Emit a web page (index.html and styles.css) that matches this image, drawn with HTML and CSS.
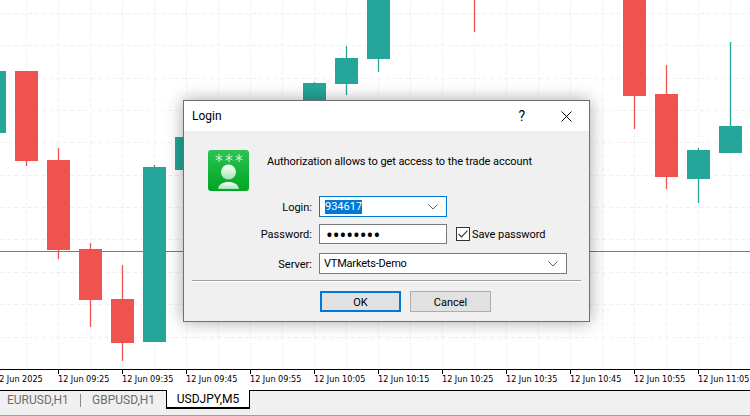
FILE: index.html
```html
<!DOCTYPE html>
<html lang="en">
<head>
    <meta charset="UTF-8">
    <title>Login</title>
    <link rel="stylesheet" href="styles.css">
</head>
<body>
    <svg class="chart" width="750" height="369" viewBox="0 0 750 369">
        <path class="grid" d="M26.5 0V369M58.5 0V369M90.5 0V369M122.5 0V369M154.5 0V369M186.5 0V369M218.5 0V369M250.5 0V369M282.5 0V369M314.5 0V369M346.5 0V369M378.5 0V369M410.5 0V369M442.5 0V369M474.5 0V369M506.5 0V369M538.5 0V369M570.5 0V369M602.5 0V369M634.5 0V369M666.5 0V369M698.5 0V369M730.5 0V369"/>
        <path class="grid" d="M0 13.5H750M0 45.5H750M0 78.5H750M0 110.5H750M0 142.5H750M0 175.5H750M0 207.5H750M0 239.5H750M0 272.5H750M0 304.5H750M0 337.5H750"/>
        <path class="price-line" d="M0 251.5H750"/>
        <path class="wick bear" d="M26.5 161V166M58.5 148V259M90.5 243V327M122.5 265V361M474.5 0V32M634.5 96V129M666.5 65V189"/>
        <path class="wick bull" d="M154.5 165V342M314.5 82V100M346.5 46V95M378.5 59V72M698.5 148V203M730.5 42V126"/>
        <path class="body bear" d="M15 71h23v90h-23zM47 160h23v90h-23zM79 249h23v51h-23zM111 299h23v44h-23zM623 0h23v96h-23zM655 94h23v83h-23z"/>
        <path class="body bull" d="M0 71h6v62h-6zM143 167h23v175h-23zM175 137h23v33h-23zM303 83h23v40h-23zM335 58h23v26h-23zM367 0h23v59h-23zM687 150h23v29h-23zM719 126h23v27h-23z"/>
    </svg>

    <div class="axis">
        <span class="tick">12 Jun 2025</span>
        <span class="tick">12 Jun 09:25</span>
        <span class="tick">12 Jun 09:35</span>
        <span class="tick">12 Jun 09:45</span>
        <span class="tick">12 Jun 09:55</span>
        <span class="tick">12 Jun 10:05</span>
        <span class="tick">12 Jun 10:15</span>
        <span class="tick">12 Jun 10:25</span>
        <span class="tick">12 Jun 10:35</span>
        <span class="tick">12 Jun 10:45</span>
        <span class="tick">12 Jun 10:55</span>
        <span class="tick">12 Jun 11:05</span>
    </div>

    <div class="tabs">
        <div class="tab first-tab">EURUSD,H1</div>
        <div class="tab-sep"></div>
        <div class="tab second-tab">GBPUSD,H1</div>
        <div class="tab active">USDJPY,M5</div>
    </div>

    <div class="dialog">
        <div class="titlebar">
            <span class="title">Login</span>
            <span class="help">?</span>
            <svg class="close" width="11" height="11" viewBox="0 0 11 11">
                <path d="M0.5 0.5L10.5 10.5M10.5 0.5L0.5 10.5"/>
            </svg>
        </div>
        <div class="dialog-body">
            <div class="intro">
                <svg class="key-icon" width="41" height="41" viewBox="0 0 41 41">
                    <defs>
                        <linearGradient id="bg" x1="0" y1="0" x2="0" y2="1">
                            <stop offset="0" stop-color="#2bc452"/>
                            <stop offset="1" stop-color="#00a524"/>
                        </linearGradient>
                        <linearGradient id="person" x1="0" y1="0" x2="0" y2="1">
                            <stop offset="0" stop-color="#ffffff"/>
                            <stop offset="1" stop-color="#a5e3b4"/>
                        </linearGradient>
                    </defs>
                    <rect width="41" height="41" rx="3" fill="url(#bg)"/>
                    <path class="stars" d="M11 4V12M7.6 6L14.4 10M14.4 6L7.6 10M21 4V12M17.6 6L24.4 10M24.4 6L17.6 10M31 4V12M27.6 6L34.4 10M34.4 6L27.6 10"/>
                    <circle cx="20.5" cy="22" r="7.5" fill="url(#person)"/>
                    <path d="M10 39C11 34 15 32 20.5 32C26 32 30 34 31 39Z" fill="url(#person)"/>
                </svg>
                <div class="intro-text">Authorization allows to get access to the trade account</div>
            </div>

            <div class="form">
                <div class="row">
                    <div class="label">Login:</div>
                    <div class="field combo focused">
                        <span class="selected">934617</span>
                        <svg class="chevron" width="10" height="6" viewBox="0 0 10 6"><path d="M0.5 0.5L5 5L9.5 0.5"/></svg>
                    </div>
                </div>
                <div class="row password-row">
                    <div class="label">Password:</div>
                    <div class="field">
                        <span class="dots">••••••••</span>
                    </div>
                    <label class="save">
                        <span class="checkbox">
                            <svg width="10" height="8" viewBox="0 0 11 9"><path d="M0.5 4.5L3.8 7.8L10.5 0.8"/></svg>
                        </span>
                        Save password
                    </label>
                </div>
                <div class="row">
                    <div class="label">Server:</div>
                    <div class="field combo wide">
                        <span class="server-name">VTMarkets-Demo</span>
                        <svg class="chevron" width="10" height="6" viewBox="0 0 10 6"><path d="M0.5 0.5L5 5L9.5 0.5"/></svg>
                    </div>
                </div>
            </div>

            <div class="separator"></div>

            <div class="buttons">
                <button class="button default-button">OK</button>
                <button class="button">Cancel</button>
            </div>
        </div>
    </div>
</body>
</html>
```

FILE: styles.css
```css
html, body {
    margin: 0;
    height: 100%;
}
body {
    width: 750px;
    height: 416px;
    overflow: hidden;
    background: #fff;
    font-family: Roboto, sans-serif;
    font-size: 12px;
    color: #000;
    position: relative;
}

/* chart */
.chart {
    display: block;
}
.grid {
    fill: none;
    stroke: #f0f0f0;
    stroke-width: 1;
    stroke-dasharray: 4 3;
}
.price-line {
    fill: none;
    stroke: #2e9c91;
    stroke-width: 1;
}
.wick {
    fill: none;
    stroke-width: 1.3;
}
.wick.bear {
    stroke: #ef5350;
}
.wick.bull {
    stroke: #26a69a;
}
.body.bear {
    fill: #ef5350;
}
.body.bull {
    fill: #26a69a;
}

/* time axis */
.axis {
    display: flex;
    height: 20px;
    margin-left: -6px;
    border-top: 1px solid #000;
    overflow: hidden;
}
.tick {
    flex: 0 0 64px;
    position: relative;
    font-family: "DejaVu Sans", sans-serif;
    font-stretch: condensed;
    font-size: 9px;
    line-height: 18px;
    white-space: nowrap;
}
.tick::before {
    content: "";
    position: absolute;
    left: 0;
    top: 0;
    width: 1px;
    height: 4px;
    background: #000;
}

/* tabs */
.tabs {
    display: flex;
    align-items: flex-start;
    height: 26px;
    box-sizing: border-box;
    border-top: 1px solid #000;
    border-bottom: 1px solid #a0a0a0;
    background: #f0f0f0;
    padding-left: 7px;
}
.tab {
    color: #6d6d6d;
    line-height: 18px;
}
.first-tab {
    width: 73px;
}
.second-tab {
    width: 74px;
}
.tab-sep {
    width: 1px;
    height: 13px;
    margin: 3px 11px 0 0;
    background: #8a8a8a;
}
.tab.active {
    margin-top: -1px;
    width: 84px;
    height: 19px;
    box-sizing: border-box;
    background: #fff;
    color: #000;
    border: 1px solid #000;
    border-top: none;
    border-bottom-width: 2px;
    text-align: center;
    line-height: 18px;
}

/* login dialog */
.dialog {
    position: absolute;
    left: 183px;
    top: 100px;
    width: 407px;
    height: 222px;
    box-sizing: border-box;
    border: 1px solid #6f6f6f;
    background: #f0f0f0;
    box-shadow: 0 0 16px rgba(0, 0, 0, 0.35);
}
.titlebar {
    display: flex;
    align-items: center;
    height: 30px;
    background: #fff;
    padding-left: 8px;
}
.title {
    flex: 1;
}
.help {
    font-size: 14px;
    margin-right: 36px;
}
.close {
    margin-right: 17px;
}
.close path {
    fill: none;
    stroke: #000;
    stroke-width: 1;
}
.dialog-body {
    padding-top: 19px;
    font-size: 11px;
}
.intro {
    display: flex;
    align-items: flex-start;
    gap: 18px;
    padding-left: 24px;
}
.key-icon {
    display: block;
}
.stars {
    fill: none;
    stroke: #d8f5df;
    stroke-width: 1;
}
.intro-text {
    margin-top: 5px;
    letter-spacing: -0.07px;
}
.form {
    margin-top: 5px;
}
.row {
    display: flex;
    align-items: center;
    height: 21px;
}
.password-row {
    height: 20px;
    margin: 7px 0 9px;
}
.label {
    width: 128px;
    text-align: right;
    margin-right: 7px;
    padding-top: 1px;
}
.field {
    display: flex;
    align-items: center;
    justify-content: space-between;
    width: 128px;
    height: 100%;
    box-sizing: border-box;
    border: 1px solid #7a7a7a;
    background: #fff;
    padding: 0 8px 0 4px;
}
.field.wide {
    width: 248px;
}
.field.focused {
    border-color: #0078d7;
}
.selected {
    background: #0078d7;
    color: #fff;
    line-height: 14px;
    margin-left: 1px;
}
.server-name {
    letter-spacing: -0.2px;
}
.dots {
    font-family: "Noto Sans", sans-serif;
    font-size: 18px;
    line-height: 16px;
    margin-left: 2px;
}
.chevron path {
    fill: none;
    stroke: #606060;
    stroke-width: 1;
}
.save {
    display: flex;
    align-items: center;
    gap: 2px;
    margin-left: 9px;
    letter-spacing: -0.05px;
}
.checkbox {
    display: flex;
    align-items: center;
    justify-content: center;
    width: 12px;
    height: 12px;
    border: 1px solid #333;
    background: #fff;
}
.checkbox path {
    fill: none;
    stroke: #333;
    stroke-width: 1.2;
}
.separator {
    height: 1px;
    margin: 6px 8px 0;
    background: #a0a0a0;
    border-bottom: 1px solid #fff;
}
.buttons {
    display: flex;
    gap: 9px;
    margin: 9px 0 0 136px;
}
.button {
    width: 81px;
    height: 21px;
    box-sizing: border-box;
    border: 1px solid #adadad;
    background: #e1e1e1;
    font-family: inherit;
    font-size: 11px;
    color: #000;
    padding: 1px 0 0;
}
.default-button {
    border: 2px solid #0078d7;
}
```
